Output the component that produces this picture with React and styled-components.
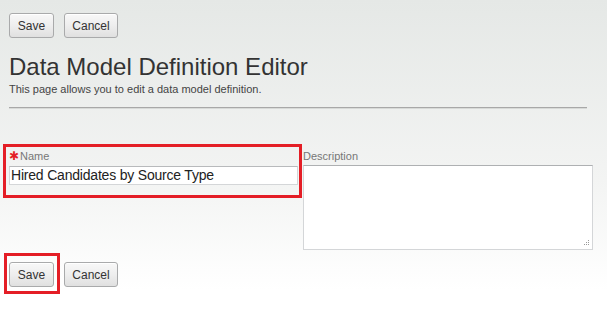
import React from "react";
import styled, { createGlobalStyle } from "styled-components";

const Global = createGlobalStyle`
  html, body { margin: 0; padding: 0; }
  body {
    font-family: "Liberation Sans", Arial, sans-serif;
    color: #333;
  }
`;

const Page = styled.div`
  min-height: 100vh;
  box-sizing: border-box;
  padding: 13px 9px 0 9px;
  background: linear-gradient(to bottom, #e5e8e6 0px, #f3f4f3 180px, #ffffff 290px);
`;

const ButtonRow = styled.div`
  display: flex;
  gap: 10px;
`;

const Button = styled.button`
  box-sizing: border-box;
  height: 25px;
  width: ${(p) => p.$w}px;
  padding: 0;
  border: 1px solid #a9aaab;
  border-radius: 3px;
  background: linear-gradient(to bottom, #f8f8f8 0%, #eeeeee 50%, #e0e0e0 100%);
  box-shadow: inset 0 1px 0 #ffffff;
  font-family: "Liberation Sans", Arial, sans-serif;
  font-size: 12px;
  color: #333;
`;

const Highlight = styled.div`
  position: relative;
  &::after {
    content: "";
    position: absolute;
    left: ${(p) => p.$l}px;
    top: ${(p) => p.$t}px;
    right: ${(p) => p.$r}px;
    bottom: ${(p) => p.$b}px;
    border: 3px solid #e41e26;
    pointer-events: none;
  }
`;

const Title = styled.h1`
  margin: 15px 0 0 0;
  font-size: 24px;
  line-height: 28px;
  font-weight: normal;
  color: #333;
`;

const Subtitle = styled.p`
  margin: 2px 0 0 0;
  font-size: 11px;
  line-height: 13px;
  color: #444;
`;

const Rule = styled.div`
  margin-top: 11px;
  width: 578px;
  border-top: 1px solid #a8a8a8;
  border-bottom: 1px solid #d8dad8;
`;

const Fields = styled.div`
  display: flex;
  align-items: flex-start;
  gap: 5px;
  margin-top: 41px;
`;

const Field = styled.div`
  display: flex;
  flex-direction: column;
  width: ${(p) => p.$w}px;
`;

const Label = styled.label`
  font-size: 11px;
  line-height: 13px;
  height: 13px;
  color: #777;
  margin-bottom: ${(p) => p.$mb}px;
  display: flex;
  align-items: center;
`;

const Star = styled.span`
  color: #e41e26;
  font-family: "DejaVu Sans", sans-serif;
  font-size: 12px;
  line-height: 13px;
  font-weight: bold;
  width: 10px;
  margin-right: 1px;
`;

const Input = styled.div`
  box-sizing: border-box;
  height: 19px;
  border: 1px solid #d4d6d8;
  border-top-color: #b8babc;
  background: #fff;
  font-size: 14px;
  letter-spacing: -0.2px;
  line-height: 17px;
  padding-left: 1px;
  color: #222;
  white-space: nowrap;
`;

const TextArea = styled.div`
  position: relative;
  box-sizing: border-box;
  height: 85px;
  border: 1px solid #d4d6d8;
  border-top-color: #aeb0b2;
  background: #fff;
`;

const Grip = styled.svg`
  position: absolute;
  right: 2px;
  bottom: 2px;
`;

const BottomRow = styled(ButtonRow)`
  margin-top: 12px;
`;

export default function App() {
  return (
    <>
      <Global />
      <Page>
        <ButtonRow>
          <Button $w={45}>Save</Button>
          <Button $w={54}>Cancel</Button>
        </ButtonRow>
        <Title>Data Model Definition Editor</Title>
        <Subtitle>This page allows you to edit a data model definition.</Subtitle>
        <Rule />
        <Fields>
          <Highlight $l={-6} $t={-6} $r={-4} $b={-13}>
            <Field $w={289}>
              <Label $mb={3}>
                <Star>✱</Star>Name
              </Label>
              <Input>Hired Candidates by Source Type</Input>
            </Field>
          </Highlight>
          <Field $w={290}>
            <Label $mb={2}>Description</Label>
            <TextArea>
              <Grip width="7" height="7" viewBox="0 0 7 7">
                <rect x="5" y="0" width="1" height="1" fill="#999" />
                <rect x="3" y="2" width="1" height="1" fill="#999" />
                <rect x="5" y="2" width="1" height="1" fill="#999" />
                <rect x="1" y="4" width="1" height="1" fill="#999" />
                <rect x="3" y="4" width="1" height="1" fill="#999" />
                <rect x="5" y="4" width="1" height="1" fill="#999" />
              </Grip>
            </TextArea>
          </Field>
        </Fields>
        <BottomRow>
          <Highlight $l={-5} $t={-9} $r={-6} $b={-7}>
            <Button $w={45}>Save</Button>
          </Highlight>
          <Button $w={54}>Cancel</Button>
        </BottomRow>
      </Page>
    </>
  );
}
